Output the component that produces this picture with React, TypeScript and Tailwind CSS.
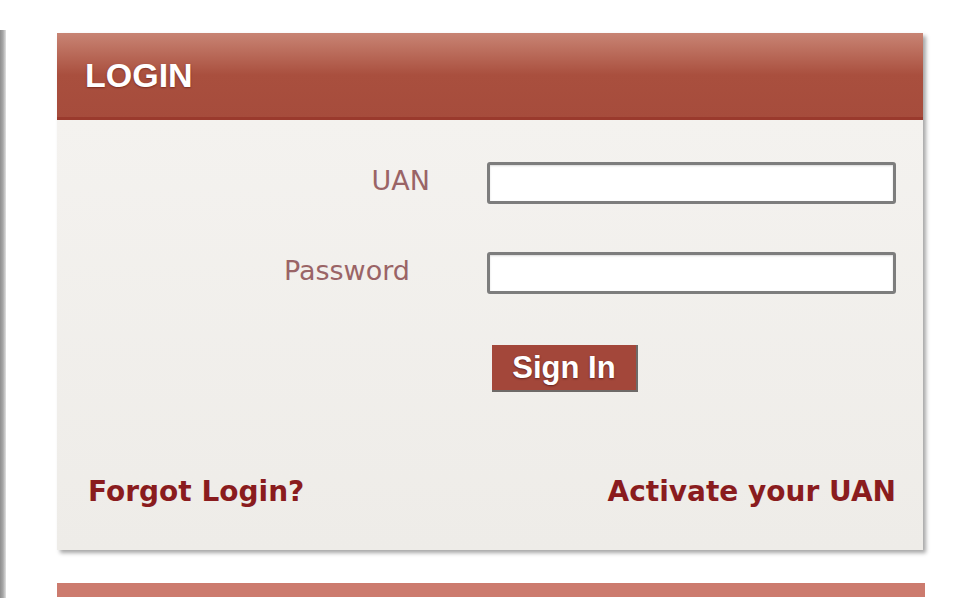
import React from "react";

export default function App() {
  return (
    <div className="flex w-[970px] h-[608px] bg-white overflow-hidden">
      <div className="w-[6px] mt-[30px] h-[568px] bg-gradient-to-r from-[#8e8e8e] via-[#a8a8a8] to-[#e2e2e2]" />
      <div className="ml-[51px] w-[866px] pt-[33px] flex flex-col">
        <div className="bg-[#f1efeb] shadow-[3px_3px_4px_rgba(0,0,0,0.35)]">
          <div className="h-[87px] flex items-center pl-[28px] bg-gradient-to-b from-[#c88474] via-[#a94f3e] to-[#a64c3c] border-b-[3px] border-[#9a3a2d]">
            <span
              className="text-white font-bold text-[34px] leading-none [text-shadow:0_1px_2px_rgba(90,20,10,0.6)]"
              style={{ fontFamily: '"Liberation Sans", Arial, sans-serif' }}
            >
              LOGIN
            </span>
          </div>
          <div
            className="pt-[42px] pb-[41px] bg-gradient-to-b from-[#f4f2ef] to-[#eeece8]"
            style={{ fontFamily: '"DejaVu Sans", Verdana, sans-serif' }}
          >
            <div className="flex items-center h-[42px]">
              <div className="w-[373px] text-right text-[27px] leading-none text-[#9a6466] -mt-[5px]">UAN</div>
              <input className="ml-[57px] w-[409px] h-[42px] bg-white border-[3px] border-[#7d7d7d] rounded-[3px] shadow-[inset_0_1px_2px_rgba(0,0,0,0.15)] outline-none" />
            </div>
            <div className="flex items-center h-[42px] mt-[48px]">
              <div className="w-[353px] text-right text-[27px] leading-none text-[#9a6466] -mt-[5px]">Password</div>
              <input
                type="password"
                className="ml-[77px] w-[409px] h-[42px] bg-white border-[3px] border-[#7d7d7d] rounded-[3px] shadow-[inset_0_1px_2px_rgba(0,0,0,0.15)] outline-none"
              />
            </div>
            <div className="flex mt-[51px] pl-[435px]">
              <button
                className="w-[146px] h-[47px] bg-[#a3473a] border-r-2 border-b-2 border-[#6e6a68] text-white font-bold text-[31px] leading-none flex items-center justify-center [text-shadow:0_1px_2px_rgba(60,10,10,0.6)]"
                style={{ fontFamily: '"Liberation Sans", Arial, sans-serif' }}
              >
                Sign In
              </button>
            </div>
            <div className="flex justify-between items-center mt-[83px] pl-[31px] pr-[27px] text-[28px] font-bold leading-[34px] text-[#8a1c1e]">
              <span>Forgot Login?</span>
              <span>Activate your UAN</span>
            </div>
          </div>
        </div>
        <div className="mt-[33px] h-[14px] w-[868px] bg-[#cc7b6e]" />
      </div>
    </div>
  );
}
